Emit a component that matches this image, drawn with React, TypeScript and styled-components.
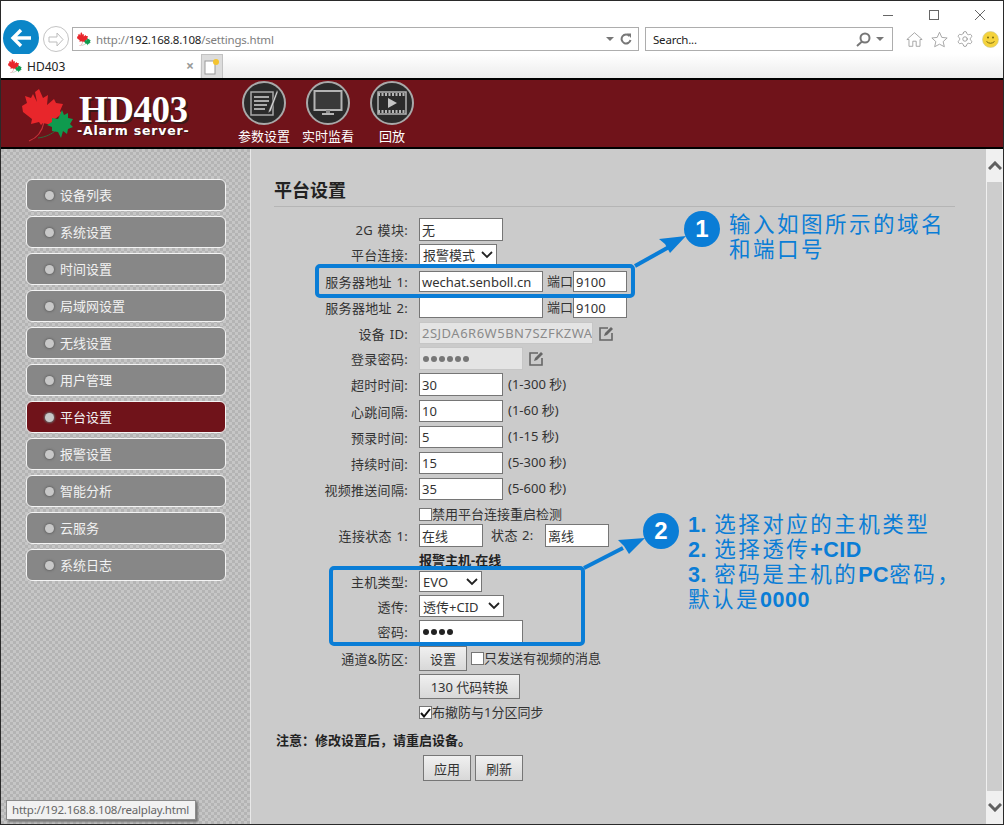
import * as React from "react";
import styled, { createGlobalStyle } from "styled-components";
import { Settings } from "lucide-react";

const GlobalStyle = createGlobalStyle`
  html, body {
    margin: 0;
    padding: 0;
    background: #fff;
  }
  * {
    box-sizing: border-box;
  }
`;

const FONT = `"Noto Sans", "Noto Sans CJK SC", sans-serif`;
const BLUE = "#0a7dd6";

const Win = styled.div`
  position: relative;
  width: 1004px;
  height: 825px;
  overflow: hidden;
  border: 1px solid #2a2a2a;
  display: flex;
  flex-direction: column;
  font-family: ${FONT};
  font-size: 13px;
  color: #333;
`;

/* browser chrome */
const TitleRow = styled.div`
  height: 26px;
  display: flex;
  justify-content: flex-end;
  padding: 9px 18px 0 0;
  gap: 36px;
`;

const WinBtn = styled.svg`
  width: 10px;
  height: 10px;
  stroke: #666;
  fill: none;
`;

const NavRow = styled.div`
  height: 24px;
  display: flex;
  align-items: center;
  padding-left: 2px;
`;

const BackBtn = styled.div`
  width: 36px;
  height: 36px;
  flex: none;
  border-radius: 50%;
  background: #0b86c8;
  display: flex;
  align-items: center;
  justify-content: center;
  margin-top: -2px;
`;

const FwdBtn = styled.div`
  width: 26px;
  height: 26px;
  flex: none;
  margin: 0 3px 0 4px;
  border-radius: 50%;
  border: 1px solid #c4c4c4;
  display: flex;
  align-items: center;
  justify-content: center;
`;

const UrlBox = styled.div<{ $w: number }>`
  width: ${(p) => p.$w}px;
  height: 24px;
  flex: none;
  display: flex;
  align-items: center;
  border: 1px solid #adadad;
  padding: 0 4px;
  font-size: 11.5px;
  letter-spacing: -0.2px;
  white-space: nowrap;
`;

const Gap = styled.div<{ $w: number }>`
  width: ${(p) => p.$w}px;
  flex: none;
`;

const UrlDim = styled.span`
  color: #7d7d7d;
`;

const UrlHost = styled.span`
  color: #222;
`;

const UrlText = styled.div`
  flex: 1;
  margin-left: 5px;
`;

const SearchText = styled.div`
  flex: 1;
  margin-left: 3px;
  color: #222;
`;

const Caret = styled.div`
  width: 0;
  height: 0;
  border-left: 4px solid transparent;
  border-right: 4px solid transparent;
  border-top: 4px solid #777;
`;

const ToolIcons = styled.div`
  display: flex;
  align-items: center;
  gap: 8px;
  margin-left: 13px;
`;

const Smile = styled.svg`
  width: 17px;
  height: 17px;
`;

const TabRow = styled.div`
  height: 24px;
  margin-top: 3px;
  display: flex;
  background: linear-gradient(#fff, #ececec);
`;

const Tab = styled.div`
  width: 199px;
  background: #fff;
  display: flex;
  align-items: center;
  padding: 0 6px 0 7px;
  font-size: 12px;
  color: #222;
`;

const TabName = styled.div`
  flex: 1;
  margin-left: 5px;
`;

const TabClose = styled.div`
  color: #999;
  font-size: 14px;
  font-weight: 700;
  line-height: 1;
`;

const NewTab = styled.div`
  width: 22px;
  margin-left: 1px;
  background: #dcdcdc;
  border: 1px solid #c2c2c2;
  border-bottom: none;
  display: flex;
  align-items: center;
  justify-content: center;
`;

/* device page header */
const Header = styled.div`
  height: 71px;
  flex: none;
  background: #70131a;
  border-top: 2px solid #000;
  border-bottom: 2px solid #000;
  display: flex;
`;

const Logo = styled.div`
  width: 214px;
  flex: none;
  display: flex;
  align-items: center;
  padding: 3px 0 0 21px;
`;

const LogoText = styled.div`
  margin: 2px 0 0 3px;
  color: #fff;
  text-align: center;
`;

const LogoTitle = styled.div`
  font-family: "Liberation Serif", serif;
  font-weight: 700;
  font-size: 37px;
  line-height: 29px;
  letter-spacing: -0.5px;
  text-shadow: 2px 2px 0 #3a1a1a;
`;

const LogoSub = styled.div`
  font-family: "DejaVu Sans", sans-serif;
  font-weight: 700;
  font-size: 12.5px;
  line-height: 14px;
  letter-spacing: 0.8px;
  white-space: nowrap;
  text-shadow: 1px 1px 0 #3a1a1a;
`;

const MainNav = styled.div`
  display: flex;
  gap: 12px;
  margin-left: 23px;
`;

const NavItem = styled.div`
  width: 52px;
  display: flex;
  flex-direction: column;
  align-items: center;
  padding-top: 1px;
  color: #fff;
  font-size: 13px;
  line-height: 18px;
  white-space: nowrap;
`;

const NavCircle = styled.div`
  width: 44px;
  height: 44px;
  margin-bottom: 2px;
  border-radius: 50%;
  background: #2b2b2b;
  border: 2px solid #a9a9a9;
  display: flex;
  align-items: center;
  justify-content: center;
`;

/* body */
const Body = styled.div`
  flex: 1;
  min-height: 0;
  display: flex;
`;

const Sidebar = styled.div`
  width: 250px;
  flex: none;
  border-right: 1px solid #e8e8e8;
  background-color: #b4b4b4;
  background-image:
    linear-gradient(45deg, #c6c6c6 25%, transparent 25%, transparent 75%, #c6c6c6 75%),
    linear-gradient(45deg, #c6c6c6 25%, transparent 25%, transparent 75%, #c6c6c6 75%);
  background-size: 6px 6px;
  background-position: 0 0, 3px 3px;
  padding: 30px 0 0 25px;
  display: flex;
  flex-direction: column;
  gap: 5px;
`;

const SideItem = styled.div<{ $active?: boolean }>`
  width: 200px;
  height: 32px;
  border: 1px solid #f4f4f4;
  border-radius: 6px;
  background: ${(p) => (p.$active ? "#70131a" : "#878787")};
  color: #f2f2f2;
  font-size: 13px;
  display: flex;
  align-items: center;
  padding-left: 18px;
  gap: 6px;
`;

const SideDot = styled.span`
  width: 9px;
  height: 9px;
  margin-top: 1px;
  border-radius: 50%;
  background: #c8c8c8;
  box-shadow: 0 0 2px 1px #6a6a6a;
`;

const SideText = styled.span`
  margin-top: -2px;
`;

const Content = styled.div`
  flex: 1;
  background: #cbcbcb;
  padding: 29px 31px 0 23px;
`;

const Title = styled.div`
  height: 29px;
  border-bottom: 1px solid #b5b5b5;
  font-size: 18px;
  font-weight: 700;
  line-height: 24px;
  color: #222;
`;

const Form = styled.div`
  display: flex;
  flex-direction: column;
`;

const Row = styled.div<{ $h?: number; $gap?: number }>`
  height: ${(p) => p.$h ?? 23}px;
  margin-top: ${(p) => p.$gap ?? 3}px;
  display: flex;
  align-items: center;
  white-space: nowrap;
`;

const Label = styled.div`
  width: 134px;
  flex: none;
  margin-right: 11px;
  text-align: right;
  font-size: 13px;
  letter-spacing: 0.3px;
  word-spacing: 1px;
  color: #333;
`;

const Field = styled.div<{ $w: number; $ml?: number; $off?: boolean }>`
  width: ${(p) => p.$w}px;
  height: 100%;
  flex: none;
  margin-left: ${(p) => p.$ml ?? 0}px;
  border: 1px solid #767676;
  border-color: ${(p) => (p.$off ? "#c6c6c6" : "#767676")};
  background: ${(p) => (p.$off ? "#e4e4e4" : "#fff")};
  color: ${(p) => (p.$off ? "#8a8a8a" : "#333")};
  font-size: 13px;
  padding: 0 2px;
  display: flex;
  align-items: center;
  overflow: hidden;
`;

const Select = styled(Field)`
  justify-content: space-between;
  padding: 0 3px;
`;

const DeviceId = styled.span`
  letter-spacing: 0.5px;
`;

const Hint = styled.div`
  margin: -3px 0 0 5px;
  font-size: 13px;
  color: #333;
`;

const PortLabel = styled.div`
  margin: -3px 0 0 4px;
  width: 26px;
  font-size: 13px;
`;

const StateLabel = styled.div`
  margin: -3px 0 0 8px;
  width: 54px;
  font-size: 13px;
  letter-spacing: 0.5px;
`;

const PassDot = styled.span<{ $dark?: boolean }>`
  width: 6px;
  height: 6px;
  margin: 0 1px 0 1px;
  flex: none;
  border-radius: 50%;
  background: ${(p) => (p.$dark ? "#222" : "#777")};
`;

const EditIcon = styled.svg`
  width: 15px;
  height: 15px;
  margin-left: 6px;
  fill: none;
  stroke: #666;
  stroke-width: 1.6;
`;

const Check = styled.div`
  width: 13px;
  height: 13px;
  flex: none;
  background: #fff;
  border: 1px solid #767676;
  display: flex;
  align-items: center;
  justify-content: center;
`;

const Bold = styled.div`
  font-weight: 700;
  font-size: 13px;
  color: #222;
`;

const Note = styled(Bold)`
  margin: 11px 0 0 2px;
  height: 20px;
  line-height: 20px;
`;

const Btn = styled.div<{ $w: number; $h?: number }>`
  width: ${(p) => p.$w}px;
  height: ${(p) => p.$h ?? 25}px;
  flex: none;
  border: 1px solid #767676;
  background: linear-gradient(#f0f0f0, #d8d8d8);
  display: flex;
  align-items: center;
  justify-content: center;
  font-size: 13px;
  color: #333;
`;

const BtnRow = styled.div`
  display: flex;
  gap: 4px;
  margin: 5px 0 0 149px;
`;

const CheckLabel = styled.div`
  margin: -3px 0 0 0;
  font-size: 13px;
`;

const Offset = styled.div`
  width: 145px;
  flex: none;
`;

const ScrollBar = styled.div`
  width: 17px;
  flex: none;
  background: #f0f0f0;
  display: flex;
  flex-direction: column;
  align-items: center;
  justify-content: space-between;
  padding: 0 1px;
`;

const ScrollBtn = styled.div`
  height: 33px;
  display: flex;
  align-items: center;
  justify-content: center;
`;

const ScrollThumb = styled.div`
  width: 15px;
  flex: 1;
  background: #cdcdcd;
`;

/* things lying over the page */
const Tooltip = styled.div`
  position: absolute;
  left: 5px;
  top: 799px;
  width: 190px;
  height: 20px;
  background: #f1f1f1;
  border: 1px solid #8a8a8a;
  box-shadow: 2px 2px 2px #777;
  font-size: 11.5px;
  letter-spacing: -0.2px;
  line-height: 18px;
  padding-left: 5px;
  color: #666;
  white-space: nowrap;
`;

const Callout = styled.div<{ $x: number; $y: number; $w: number; $h: number }>`
  position: absolute;
  left: ${(p) => p.$x}px;
  top: ${(p) => p.$y}px;
  width: ${(p) => p.$w}px;
  height: ${(p) => p.$h}px;
  border: 4px solid ${BLUE};
  border-radius: 5px;
`;

const Badge = styled.div<{ $x: number; $y: number }>`
  position: absolute;
  left: ${(p) => p.$x}px;
  top: ${(p) => p.$y}px;
  width: 36px;
  height: 36px;
  border-radius: 50%;
  background: ${BLUE};
  color: #fff;
  font-family: "Liberation Sans", sans-serif;
  font-size: 24px;
  font-weight: 700;
  display: flex;
  align-items: center;
  justify-content: center;
`;

const Remark = styled.div<{ $x: number; $y: number }>`
  position: absolute;
  left: ${(p) => p.$x}px;
  top: ${(p) => p.$y}px;
  color: ${BLUE};
  font-size: 21.5px;
  letter-spacing: 2.5px;
  white-space: nowrap;
  font-family: "Noto Sans CJK SC", sans-serif;
  font-weight: 400;
`;

const RemarkLine = styled.div`
  height: 25px;
  line-height: 25px;
  overflow: visible;
`;

const Latin = styled.b`
  font-family: "Liberation Sans", sans-serif;
  font-weight: 700;
  letter-spacing: 0.5px;
`;

const ArrowLayer = styled.svg`
  position: absolute;
  left: 0;
  top: 0;
  width: 1004px;
  height: 825px;
  pointer-events: none;
`;

const Leaf: React.FC<{ size: number }> = ({ size }) => (
  <svg width={size} height={(size * 54) / 52} viewBox="0 0 52 54" style={{ flex: "none" }}>
    <path d="M7 53 C15 50 20 45 22 34" stroke="#c8323a" strokeWidth="1.2" fill="none" />
    <path d="M16 50 C24 49 30 46 34 42" stroke="#2e6b3c" strokeWidth="1" fill="none" />
    <path
      d="M17 1 L21 10 L26 7 L25 17 L32 11 L34 15 L41 16 L38 23 L40 26 L30 33 L30 37 L21 35 L19 37 L17 34 L9 36 L10 31 L1 24 L0 18 L5 15 L3 8 L9 10 L11 6 L15 14 L13 4 Z"
      fill="#e8262b"
    />
    <path
      d="M40 22 L42 27 L46 25 L46 30 L51 31 L48 36 L51 39 L46 41 L45 46 L41 43 L39 50 L36 44 L30 43 L30 39 L25 37 L30 34 L30 30 L36 31 Z"
      fill="#0f9a4e"
    />
  </svg>
);

const items = ["设备列表", "系统设置", "时间设置", "局域网设置", "无线设置", "用户管理", "平台设置", "报警设置", "智能分析", "云服务", "系统日志"];

const timing = [
  { label: "超时时间:", value: "30", hint: "(1-300 秒)", h: 23 },
  { label: "心跳间隔:", value: "10", hint: "(1-60 秒)", h: 22 },
  { label: "预录时间:", value: "5", hint: "(1-15 秒)", h: 22 },
  { label: "持续时间:", value: "15", hint: "(5-300 秒)", h: 22 },
  { label: "视频推送间隔:", value: "35", hint: "(5-600 秒)", h: 22 },
];

const Chevron: React.FC = () => (
  <svg width="12" height="8" viewBox="0 0 12 8" fill="none" stroke="#222" strokeWidth="1.8">
    <path d="M1 1 L6 6 L11 1" />
  </svg>
);

const Edit: React.FC = () => (
  <EditIcon viewBox="0 0 15 15">
    <path d="M9 2 H1 V14 H13 V7" />
    <path d="M5 10 L6 7 L12 1 L14 3 L8 9 Z" fill="#666" stroke="none" />
  </EditIcon>
);

const App: React.FC = () => {
  return (
    <Win>
      <GlobalStyle />
      <TitleRow>
        <WinBtn viewBox="0 0 10 10"><path d="M0 5.500 H10" /></WinBtn>
        <WinBtn viewBox="0 0 10 10"><rect x="0.500" y="0.500" width="9" height="9" /></WinBtn>
        <WinBtn viewBox="0 0 10 10"><path d="M0 0 L10 10 M10 0 L0 10" /></WinBtn>
      </TitleRow>

      <NavRow>
        <BackBtn>
          <svg width="22" height="20" viewBox="0 0 22 20" fill="none" stroke="#fff" strokeWidth="3.4">
            <path d="M11 2 L3 10 L11 18 M3 10 H21" />
          </svg>
        </BackBtn>
        <FwdBtn>
          <svg width="17" height="15" viewBox="0 0 17 15" fill="none" stroke="#bdbdbd" strokeWidth="1">
            <path d="M9 1 L15 7.5 L9 14 V10 H1 V5 H9 Z" />
          </svg>
        </FwdBtn>
        <UrlBox $w={567}>
          <Leaf size={14} />
          <UrlText>
            <UrlDim>http://</UrlDim>
            <UrlHost>192.168.8.108</UrlHost>
            <UrlDim>/settings.html</UrlDim>
          </UrlText>
          <Caret />
          <Gap $w={6} />
          <svg width="12" height="12" viewBox="0 0 12 12" fill="none" stroke="#777" strokeWidth="2">
            <path d="M9.5 3 A4.5 4.5 0 1 0 10.5 7" />
            <path d="M7 0.5 L11 0.5 L11 5 Z" fill="#777" stroke="none" />
          </svg>
          <Gap $w={2} />
        </UrlBox>
        <Gap $w={6} />
        <UrlBox $w={248}>
          <SearchText>Search...</SearchText>
          <svg width="15" height="15" viewBox="0 0 15 15" fill="none" stroke="#777" strokeWidth="2">
            <circle cx="9" cy="6" r="4.5" />
            <path d="M6 9.5 L1 14" />
          </svg>
          <Gap $w={5} />
          <Caret />
          <Gap $w={4} />
        </UrlBox>
        <ToolIcons>
          <svg width="17" height="17" viewBox="0 0 20 18" fill="#fff" stroke="#999" strokeWidth="1">
            <path d="M1 9 L10 1 L19 9 L16.5 9 V17 H12 V11 H8 V17 H3.500 V9 Z" />
          </svg>
          <svg width="17" height="17" viewBox="0 0 20 19" fill="#fff" stroke="#999" strokeWidth="1">
            <path d="M10 1 L12.700 7 L19 7.700 L14.300 12 L15.700 18 L10 15 L4.300 18 L5.700 12 L1 7.700 L7.300 7 Z" />
          </svg>
          <Settings size={18} color="#888" strokeWidth={1} />
          <Smile viewBox="0 0 17 17">
            <circle cx="8.500" cy="8.500" r="8" fill="#f5d33c" stroke="#c9c9a0" strokeWidth="0.6" />
            <circle cx="6" cy="6.500" r="1" fill="#7a6a10" />
            <circle cx="11" cy="6.500" r="1" fill="#7a6a10" />
            <path d="M4.500 10.500 Q8.500 14 12.500 10.500" fill="none" stroke="#7a6a10" strokeWidth="1" />
          </Smile>
        </ToolIcons>
      </NavRow>

      <TabRow>
        <Tab>
          <Leaf size={14} />
          <TabName>HD403</TabName>
          <TabClose>×</TabClose>
        </Tab>
        <NewTab>
          <svg width="16" height="17" viewBox="0 0 16 17">
            <rect x="1" y="3" width="10" height="13" fill="#fff" stroke="#999" />
            <circle cx="12" cy="4" r="3" fill="#f4c430" />
          </svg>
        </NewTab>
      </TabRow>

      <Header>
        <Logo>
          <Leaf size={52} />
          <LogoText>
            <LogoTitle>HD403</LogoTitle>
            <LogoSub>-Alarm server-</LogoSub>
          </LogoText>
        </Logo>
        <MainNav>
          <NavItem>
            <NavCircle>
              <svg width="30" height="30" viewBox="0 0 30 30" fill="none" stroke="#a9a9a9">
                <rect x="2" y="4" width="22" height="23" strokeWidth="1.5" />
                <path d="M5 9 H20 M5 13 H20 M5 17 H18 M5 21 H16" strokeWidth="2" />
                <path d="M28 2 L20 22 L19 25 L22 23 L29 4 Z" fill="#d8d8d8" stroke="#2b2b2b" strokeWidth="0.5" />
              </svg>
            </NavCircle>
            参数设置
          </NavItem>
          <NavItem>
            <NavCircle>
              <svg width="30" height="28" viewBox="0 0 30 28" fill="none">
                <rect x="1.500" y="2" width="27" height="19" fill="#3a3a3a" stroke="#b4b4b4" strokeWidth="2" />
                <path d="M9 25 H21" stroke="#b4b4b4" strokeWidth="2" />
                <path d="M13 21 H17 V24 H13 Z" fill="#8a8a8a" />
              </svg>
            </NavCircle>
            实时监看
          </NavItem>
          <NavItem>
            <NavCircle>
              <svg width="30" height="26" viewBox="0 0 30 26" fill="none">
                <rect x="1" y="2" width="28" height="22" stroke="#b4b4b4" strokeWidth="1.5" />
                <path d="M1 4.500 H29 M1 21.500 H29" stroke="#b4b4b4" strokeWidth="3" strokeDasharray="2 1.500" />
                <path d="M11 8 L20 13 L11 18 Z" fill="#c4c4c4" />
              </svg>
            </NavCircle>
            回放
          </NavItem>
        </MainNav>
      </Header>

      <Body>
        <Sidebar>
          {items.map((item) => (
            <SideItem key={item} $active={item === "平台设置"}>
              <SideDot />
              <SideText>{item}</SideText>
            </SideItem>
          ))}
        </Sidebar>

        <Content>
          <Title>平台设置</Title>
          <Form>
            <Row $gap={11}>
              <Label>2G 模块:</Label>
              <Field $w={84}>无</Field>
            </Row>
            <Row $h={21}>
              <Label>平台连接:</Label>
              <Select $w={78}>报警模式<Chevron /></Select>
            </Row>
            <Row $h={21} $gap={6}>
              <Label>服务器地址 1:</Label>
              <Field $w={124}>wechat.senboll.cn</Field>
              <PortLabel>端口</PortLabel>
              <Field $w={54}>9100</Field>
            </Row>
            <Row $h={21} $gap={5}>
              <Label>服务器地址 2:</Label>
              <Field $w={124} />
              <PortLabel>端口</PortLabel>
              <Field $w={54}>9100</Field>
            </Row>
            <Row $h={22} $gap={4}>
              <Label>设备 ID:</Label>
              <Field $w={174} $off><DeviceId>2SJDA6R6W5BN7SZFKZWA</DeviceId></Field>
              <Edit />
            </Row>
            <Row $h={23}>
              <Label>登录密码:</Label>
              <Field $w={104} $off>
                {[0, 1, 2, 3, 4, 5].map((i) => <PassDot key={i} />)}
              </Field>
              <Edit />
            </Row>
            {timing.map((t) => (
              <Row key={t.label} $h={t.h} $gap={t.h === 23 ? 3 : 4}>
                <Label>{t.label}</Label>
                <Field $w={84}>{t.value}</Field>
                <Hint>{t.hint}</Hint>
              </Row>
            ))}
            <Row $h={13} $gap={8}>
              <Offset />
              <Check />
              <CheckLabel>禁用平台连接重启检测</CheckLabel>
            </Row>
            <Row $gap={3}>
              <Label>连接状态 1:</Label>
              <Field $w={64}>在线</Field>
              <StateLabel>状态 2:</StateLabel>
              <Field $w={64}>离线</Field>
            </Row>
            <Row $h={18} $gap={3}>
              <Offset />
              <Bold>报警主机-在线</Bold>
            </Row>
            <Row $h={21} $gap={3}>
              <Label>主机类型:</Label>
              <Select $w={63}>EVO<Chevron /></Select>
            </Row>
            <Row $h={22}>
              <Label>透传:</Label>
              <Select $w={85}>透传+CID<Chevron /></Select>
            </Row>
            <Row>
              <Label>密码:</Label>
              <Field $w={104}>
                {[0, 1, 2, 3].map((i) => <PassDot key={i} $dark />)}
              </Field>
            </Row>
            <Row $h={25}>
              <Label>通道&amp;防区:</Label>
              <Btn $w={48}>设置</Btn>
              <Gap $w={4} />
              <Check />
              <CheckLabel>只发送有视频的消息</CheckLabel>
            </Row>
            <Row $h={25}>
              <Offset />
              <Btn $w={101}>130 代码转换</Btn>
            </Row>
            <Row $h={13} $gap={7}>
              <Offset />
              <Check>
                <svg width="11" height="10" viewBox="0 0 11 10" fill="none" stroke="#111" strokeWidth="2">
                  <path d="M1 5 L4 8.500 L10 1" />
                </svg>
              </Check>
              <CheckLabel>布撤防与1分区同步</CheckLabel>
            </Row>
            <Note>{"注意\uFF1A修改设置后\uFF0C请重启设备\u3002"}</Note>
            <BtnRow>
              <Btn $w={48} $h={26}>应用</Btn>
              <Btn $w={48} $h={26}>刷新</Btn>
            </BtnRow>
          </Form>
        </Content>

        <ScrollBar>
          <ScrollBtn>
            <svg width="14" height="9" viewBox="0 0 14 9" fill="none" stroke="#606060" strokeWidth="3">
              <path d="M1 8 L7 2 L13 8" />
            </svg>
          </ScrollBtn>
          <ScrollThumb />
          <ScrollBtn>
            <svg width="14" height="9" viewBox="0 0 14 9" fill="none" stroke="#606060" strokeWidth="3">
              <path d="M1 1 L7 7 L13 1" />
            </svg>
          </ScrollBtn>
        </ScrollBar>
      </Body>

      <Tooltip>http://192.168.8.108/realplay.html</Tooltip>

      <Callout $x={314} $y={263} $w={320} $h={34} />
      <Callout $x={328} $y={565} $w={256} $h={80} />
      <ArrowLayer viewBox="0 0 1004 825">
        <path d="M634 265 L668 246" stroke={BLUE} strokeWidth="4" />
        <path d="M685 235 L658 238 L664 243 L669 252 Z" fill={BLUE} />
        <path d="M583 567 L622 547" stroke={BLUE} strokeWidth="4" />
        <path d="M644 537 L617 539 L623 545 L628 553 Z" fill={BLUE} />
      </ArrowLayer>
      <Badge $x={683} $y={210}>1</Badge>
      <Badge $x={642} $y={512}>2</Badge>
      <Remark $x={728} $y={209}>
        <RemarkLine>输入如图所示的域名</RemarkLine>
        <RemarkLine>和端口号</RemarkLine>
      </Remark>
      <Remark $x={687} $y={509}>
        <RemarkLine><Latin>1.</Latin> 选择对应的主机类型</RemarkLine>
        <RemarkLine><Latin>2.</Latin> 选择透传<Latin>+CID</Latin></RemarkLine>
        <RemarkLine><Latin>3.</Latin> 密码是主机的<Latin>PC</Latin>{"密码\uFF0C"}</RemarkLine>
        <RemarkLine>默认是<Latin>0000</Latin></RemarkLine>
      </Remark>
    </Win>
  );
};

export default App;
